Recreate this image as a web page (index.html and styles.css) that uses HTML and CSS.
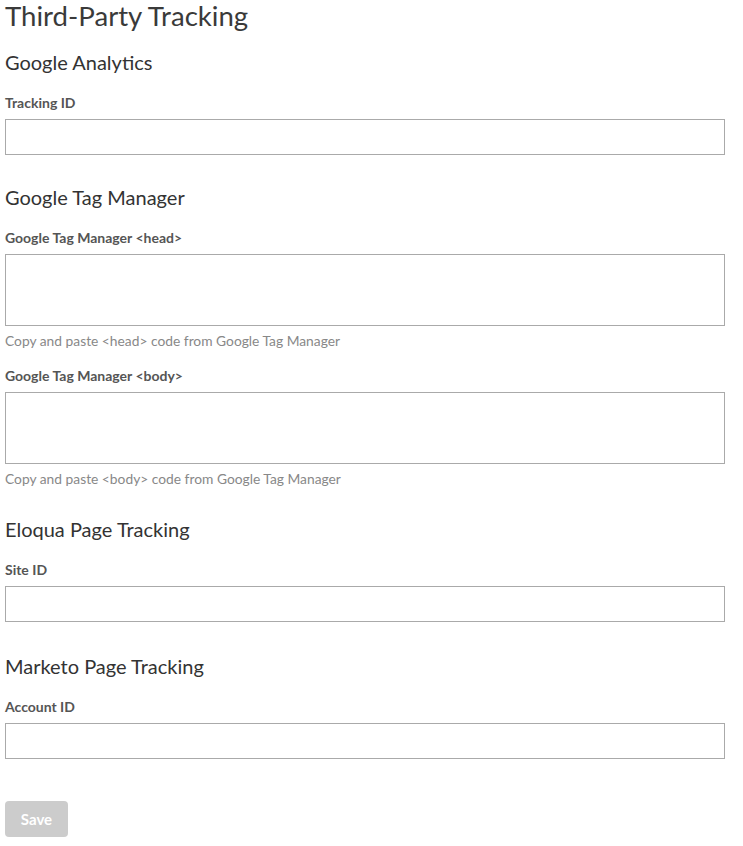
FILE: index.html
```html
<!DOCTYPE html>
<html>
<head>
<meta charset="utf-8">
<link rel="stylesheet" href="styles.css">
</head>
<body>
<div class="page">
  <h1 class="title">Third-Party Tracking</h1>

  <section class="section section--first">
    <h2 class="section-title">Google Analytics</h2>
    <div class="field">
      <label class="label">Tracking ID</label>
      <input class="input" type="text">
    </div>
  </section>

  <section class="section section--tight">
    <h2 class="section-title">Google Tag Manager</h2>
    <div class="field">
      <label class="label">Google Tag Manager &lt;head&gt;</label>
      <textarea class="textarea"></textarea>
      <div class="help">Copy and paste &lt;head&gt; code from Google Tag Manager</div>
    </div>
    <div class="field field--after-help">
      <label class="label">Google Tag Manager &lt;body&gt;</label>
      <textarea class="textarea"></textarea>
      <div class="help">Copy and paste &lt;body&gt; code from Google Tag Manager</div>
    </div>
  </section>

  <section class="section section--after-help">
    <h2 class="section-title">Eloqua Page Tracking</h2>
    <div class="field">
      <label class="label">Site ID</label>
      <input class="input" type="text">
    </div>
  </section>

  <section class="section">
    <h2 class="section-title">Marketo Page Tracking</h2>
    <div class="field">
      <label class="label">Account ID</label>
      <input class="input" type="text">
    </div>
  </section>

  <div class="actions">
    <button class="btn-save" type="button">Save</button>
  </div>
</div>
</body>
</html>
```

FILE: styles.css
```css
* { box-sizing: border-box; }
html, body { margin: 0; padding: 0; background: #fff; }
body {
  font-family: Lato, "Noto Sans", sans-serif;
  color: #333;
}
.page {
  width: 720px;
  margin-left: 5px;
  display: flex;
  flex-direction: column;
}
.title {
  margin: 0;
  font-size: 27.6px;
  font-weight: 400;
  line-height: 32px;
  color: #3a3a3a;
}
.section {
  display: flex;
  flex-direction: column;
}
.section-title {
  margin: 32px 0 0;
  font-size: 20px;
  font-weight: 400;
  line-height: 24px;
  color: #333;
}
.section--first .section-title { margin-top: 18px; }
.section--tight .section-title { margin-top: 30px; }
.section--after-help .section-title { margin-top: 30px; }
.field {
  display: flex;
  flex-direction: column;
  margin-top: 20px;
}
.field--after-help { margin-top: 18px; }
.label {
  font-size: 14px;
  font-weight: 700;
  line-height: 17px;
  color: #555;
  margin-bottom: 8px;
}
.input {
  display: block;
  width: 720px;
  height: 36px;
  border: 1px solid #aaa;
  border-radius: 0;
  padding: 0 8px;
  margin: 0;
  font: inherit;
  background: #fff;
}
.textarea {
  display: block;
  width: 720px;
  height: 72px;
  border: 1px solid #aaa;
  border-radius: 0;
  padding: 6px 8px;
  margin: 0;
  font: inherit;
  resize: none;
  background: #fff;
}
.help {
  font-size: 13.8px;
  line-height: 17px;
  color: #888;
  margin-top: 6px;
}
.actions {
  margin-top: 42px;
}
.btn-save {
  width: 63px;
  height: 36px;
  border: none;
  border-radius: 4px;
  background: #ccc;
  color: #fff;
  font-family: Lato, "Noto Sans", sans-serif;
  font-size: 15px;
  font-weight: 700;
  padding: 0;
}
```
